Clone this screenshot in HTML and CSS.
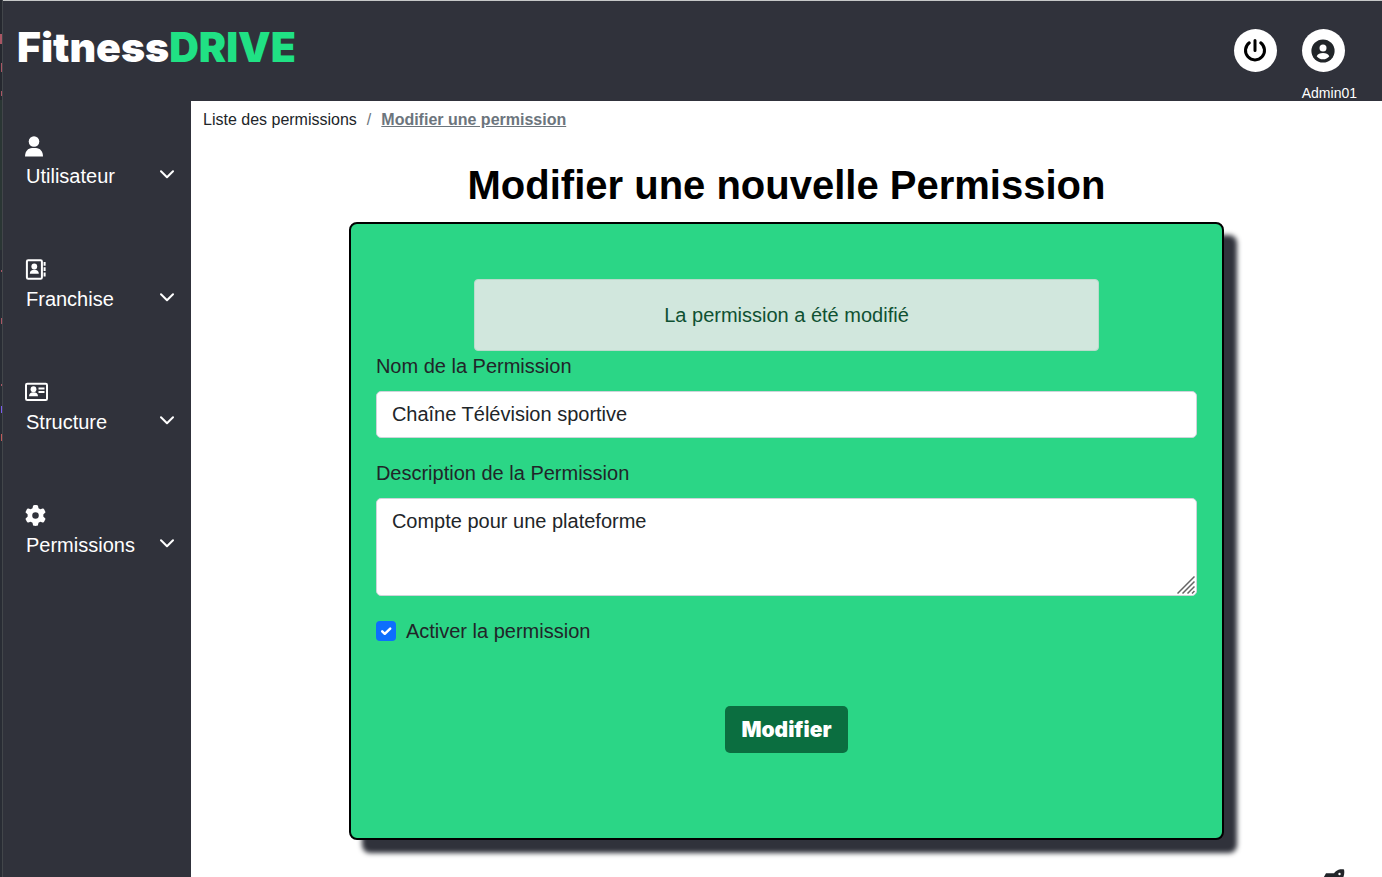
FILE: index.html
```html
<!DOCTYPE html>
<html lang="fr">
<head>
<meta charset="utf-8">
<meta name="viewport" content="width=device-width, initial-scale=1">
<title>FitnessDRIVE</title>
<link rel="stylesheet" href="styles.css">
</head>
<body>
<div class="edge" aria-hidden="true"></div>
<div class="app">
  <header class="topbar">
    <a class="brand" href="#">Fitness<span class="brand-accent">DRIVE</span></a>
    <div class="account">
      <button class="round" type="button" aria-label="Déconnexion">
        <svg width="24" height="24" viewBox="0 0 24 24" fill="none" stroke="#000" stroke-width="3" stroke-linecap="round"><path d="M12 1.500v10M6.300 3.800a9.500 9.500 0 1 0 11.400 0"/></svg>
      </button>
      <div class="profile">
        <button class="round" type="button" aria-label="Profil">
          <svg width="24" height="24" viewBox="0 0 24 24"><circle cx="12" cy="12" r="11.600" fill="#212529"/><circle cx="12" cy="9" r="3.500" fill="#fff"/><path d="M5.700 17.200c1-2.400 3.400-3.200 6.300-3.200s5.300.8 6.300 3.200c-1.500 2-3.700 3.100-6.300 3.100s-4.800-1.100-6.300-3.100z" fill="#fff"/></svg>
        </button>
        <span class="profile-name">Admin01</span>
      </div>
    </div>
  </header>
  <div class="body">
    <nav class="sidebar">
      <button class="item" type="button">
        <svg class="icon" width="18" height="21" viewBox="0 0 18 21" fill="#fff"><circle cx="9" cy="5.500" r="5.300"/><path d="M0 20.500c0-5 3-8.500 7-8.500h4c4 0 7 3.500 7 8.500z"/></svg>
        <span class="item-row">Utilisateur<svg class="chevron" width="14" height="9" viewBox="0 0 14 9"><path d="M1 1.300l6 6 6-6"/></svg></span>
      </button>
      <button class="item" type="button">
        <svg class="icon" width="21" height="21" viewBox="0 0 21 21" fill="none"><rect x="1.900" y="1.200" width="15" height="18.500" rx="1.300" stroke="#fff" stroke-width="2"/><circle cx="9.300" cy="7.500" r="2.900" fill="#fff"/><path d="M4.800 14.800c0-2.800 1.700-4 4.500-4s4.500 1.200 4.500 4z" fill="#fff"/><path d="M19.600 3v3.800M19.600 8.300v3.800M19.600 13.600v3.800" stroke="#fff" stroke-width="2"/></svg>
        <span class="item-row">Franchise<svg class="chevron" width="14" height="9" viewBox="0 0 14 9"><path d="M1 1.300l6 6 6-6"/></svg></span>
      </button>
      <button class="item" type="button">
        <svg class="icon" width="23" height="21" viewBox="0 0 23 21" fill="none"><rect x="1" y="1.800" width="21" height="16.200" rx="1.300" stroke="#fff" stroke-width="2"/><circle cx="8.500" cy="7.200" r="2.900" fill="#fff"/><path d="M4 14.300c0-2.800 1.700-4 4.500-4s4.500 1.200 4.500 4z" fill="#fff"/><path d="M13.500 6.500h6M13.500 10h6" stroke="#fff" stroke-width="2"/></svg>
        <span class="item-row">Structure<svg class="chevron" width="14" height="9" viewBox="0 0 14 9"><path d="M1 1.300l6 6 6-6"/></svg></span>
      </button>
      <button class="item" type="button">
        <svg class="icon" width="21" height="21" viewBox="0 0 512 512" fill="#fff"><path d="M495.9 166.6c3.2 8.7 .5 18.4-6.4 24.6l-43.3 39.4c1.1 8.3 1.7 16.8 1.7 25.4s-.6 17.1-1.7 25.4l43.3 39.4c6.9 6.2 9.6 15.9 6.4 24.6c-4.4 11.9-9.7 23.3-15.8 34.3l-4.7 8.1c-6.6 11-14 21.4-22.1 31.2c-5.9 7.2-15.7 9.6-24.5 6.8l-55.7-17.7c-13.4 10.3-28.2 18.9-44 25.4l-12.5 57.1c-2 9.1-9 16.3-18.2 17.8c-13.8 2.3-28 3.5-42.5 3.5s-28.7-1.2-42.5-3.5c-9.2-1.5-16.2-8.7-18.2-17.8l-12.5-57.1c-15.8-6.5-30.6-15.1-44-25.4L83.1 425.9c-8.8 2.8-18.6 .3-24.5-6.8c-8.1-9.8-15.5-20.2-22.1-31.2l-4.7-8.1c-6.1-11-11.4-22.4-15.8-34.3c-3.2-8.7-.5-18.4 6.4-24.6l43.3-39.4C64.6 273.1 64 264.6 64 256s.6-17.1 1.7-25.4L22.4 191.2c-6.9-6.2-9.6-15.9-6.4-24.6c4.4-11.9 9.7-23.3 15.8-34.3l4.7-8.1c6.6-11 14-21.4 22.1-31.2c5.9-7.2 15.7-9.6 24.5-6.8l55.7 17.7c13.4-10.3 28.2-18.9 44-25.4l12.5-57.1c2-9.1 9-16.3 18.2-17.8C227.3 1.2 241.5 0 256 0s28.7 1.2 42.5 3.5c9.2 1.5 16.2 8.7 18.2 17.8l12.5 57.1c15.8 6.5 30.6 15.1 44 25.4l55.7-17.7c8.8-2.8 18.6-.3 24.5 6.8c8.1 9.8 15.5 20.2 22.1 31.2l4.7 8.1c6.1 11 11.4 22.4 15.8 34.3zM256 336a80 80 0 1 0 0-160 80 80 0 1 0 0 160z"/></svg>
        <span class="item-row">Permissions<svg class="chevron" width="14" height="9" viewBox="0 0 14 9"><path d="M1 1.300l6 6 6-6"/></svg></span>
      </button>
    </nav>
    <main class="main">
      <nav class="crumbs" aria-label="Fil d'Ariane">
        <a class="crumb" href="#">Liste des permissions</a>
        <span class="slash">/</span>
        <a class="crumb crumb-current" href="#" aria-current="page">Modifier une permission</a>
      </nav>
      <h1 class="title">Modifier une nouvelle Permission</h1>
      <form class="card">
        <div class="alert" role="alert">La permission a été modifié</div>
        <label class="label" for="nom">Nom de la Permission</label>
        <input class="field" id="nom" type="text" value="Chaîne Télévision sportive">
        <label class="label" for="description">Description de la Permission</label>
        <div class="area-wrap">
          <textarea class="field area" id="description">Compte pour une plateforme</textarea>
          <svg class="grip" width="18" height="18" viewBox="0 0 18 18" stroke="#666" stroke-width="1.500" aria-hidden="true"><path d="M.5 17.500l17-17M5.500 17.500l12-12M10.500 17.500l7-7M15 17.500l2.500-2.500"/></svg>
        </div>
        <div class="check-row">
          <input class="check" id="active" type="checkbox" checked>
          <label for="active">Activer la permission</label>
        </div>
        <button class="submit" type="button">Modifier</button>
      </form>
    </main>
  </div>
</div>
<a class="to-top" href="#" aria-label="Haut de page">
  <svg width="28" height="28" viewBox="0 0 28 28"><path d="M21.500 .8c2-.6 4.500-.6 5.500-.2.500 2 .400 5-.5 7.200-.8 2-2.500 4-4.500 5.500v6l-6 4v-6l-6-6H5l4-7h8C18 3 19.500 1.500 21.500 .8z" fill="#212529"/><circle cx="22.500" cy="5" r="1.200" fill="#fff"/></svg>
</a>
</body>
</html>
```
FILE: styles.css
```css
* { box-sizing: border-box; }

body {
  margin: 0;
  display: flex;
  height: 100vh;
  overflow: hidden;
  position: relative;
  background: #fff;
  color: #212529;
  font-family: "Liberation Sans", Arial, sans-serif;
  font-size: 20px;
  line-height: 30px;
}

button, input, textarea { font: inherit; }
a { color: inherit; text-decoration: none; }

.edge {
  flex: none;
  width: 3px;
  border-right: 1px solid #42464a;
  background:
    linear-gradient(#a95664 0 0) 0 34px / 2px 10px no-repeat,
    linear-gradient(#a95664 0 0) 1px 63px / 1px 9px no-repeat,
    linear-gradient(#a95664 0 0) 1px 91px / 1px 5px no-repeat,
    linear-gradient(#a95664 0 0) 1px 270px / 1px 2px no-repeat,
    linear-gradient(#a95664 0 0) 1px 318px / 1px 6px no-repeat,
    linear-gradient(#a95664 0 0) 1px 384px / 1px 2px no-repeat,
    linear-gradient(#7b5cf0 0 0) 1px 406px / 1px 7px no-repeat,
    linear-gradient(#c05a5a 0 0) 1px 434px / 1px 7px no-repeat,
    linear-gradient(#25282f 0 100px, #2a3634 100px 250px, #282c34 250px);
}

.app {
  flex: 1;
  display: flex;
  flex-direction: column;
  border-top: 1px solid #c6c8c8;
  background: #30323b;
}

.topbar {
  display: flex;
  justify-content: space-between;
  align-items: flex-start;
  padding: 28px 25px 0 14px;
}

.brand, .submit {
  color: #fff;
  font-family: "Arial Black", Inter, sans-serif;
  font-weight: 900;
}

.brand {
  font-size: 41px;
  line-height: 36px;
}

.brand-accent { color: #20e184; }

.account { display: flex; gap: 25px; }

.profile {
  display: flex;
  flex-direction: column;
  gap: 14px;
}

.profile-name {
  color: #fff;
  font-size: 14px;
  line-height: 15px;
}

.round {
  display: grid;
  place-items: center;
  width: 43px;
  height: 43px;
  padding: 0;
  border: 0;
  border-radius: 50%;
  background: #fff;
}

.body { flex: 1; display: flex; }

.sidebar {
  flex: none;
  width: 188px;
  display: flex;
  flex-direction: column;
  gap: 68px;
  padding: 35px 17px 0 22px;
}

.item {
  display: flex;
  flex-direction: column;
  gap: 4px;
  padding: 0;
  border: 0;
  background: none;
  color: #fff;
  text-align: left;
}

.item-row {
  width: 100%;
  display: flex;
  justify-content: space-between;
  align-items: center;
  padding-left: 1px;
}

.chevron {
  margin-bottom: 4px;
  fill: none;
  stroke: #fff;
  stroke-width: 2;
  stroke-linecap: round;
  stroke-linejoin: round;
}

.main {
  flex: 1;
  background: #fff;
  padding: 7px 12px 0;
}

.crumbs {
  display: flex;
  gap: 10px;
  font-size: 16px;
  line-height: 24px;
}

.slash { color: #6c757d; }

.crumb-current {
  color: #6c757d;
  font-weight: 700;
  text-decoration: underline;
}

.title {
  margin: 29px 0 13px;
  color: #000;
  font-size: 40px;
  line-height: 48px;
  text-align: center;
}

.card {
  width: 75%;
  margin: 0 auto;
  padding: 55px 25px 85px;
  border: 2px solid #000;
  border-radius: 8px;
  background: #2bd686;
  box-shadow: 13px 13px 5px #30323b;
}

.alert {
  width: 76%;
  margin: 0 auto;
  padding: 20px;
  border: 1px solid #badbcc;
  border-radius: 4px;
  background: #d1e7dd;
  color: #0f5132;
  text-align: center;
}

.label { display: block; margin-bottom: 10px; }

.field {
  display: block;
  width: 100%;
  margin: 0 0 20px;
  padding: 7px 15px 8px;
  border: 1px solid #ced4da;
  border-radius: 5px;
  background: #fff;
  color: #212529;
}

.area-wrap { position: relative; }

.area {
  height: 98px;
  resize: none;
}

.grip {
  position: absolute;
  right: 2px;
  bottom: 2px;
}

.check-row {
  display: flex;
  align-items: center;
  gap: 10px;
}

.check {
  appearance: none;
  width: 20px;
  height: 20px;
  margin: 0;
  border-radius: 4px;
  background: #0d6efd url("data:image/svg+xml,%3Csvg xmlns='http://www.w3.org/2000/svg' viewBox='0 0 20 20'%3E%3Cpath fill='none' stroke='%23fff' stroke-linecap='round' stroke-linejoin='round' stroke-width='2.500' d='M6.200 10.300l2.600 2.500 5.400-5.200'/%3E%3C/svg%3E") center / contain;
}

.submit {
  display: block;
  margin: 60px auto 0;
  padding: 9px 16px 8px;
  border: 0;
  border-radius: 5px;
  background: #0b6e40;
  font-size: 21px;
}

.to-top {
  position: absolute;
  right: 37px;
  bottom: -20px;
  line-height: 0;
}
```
